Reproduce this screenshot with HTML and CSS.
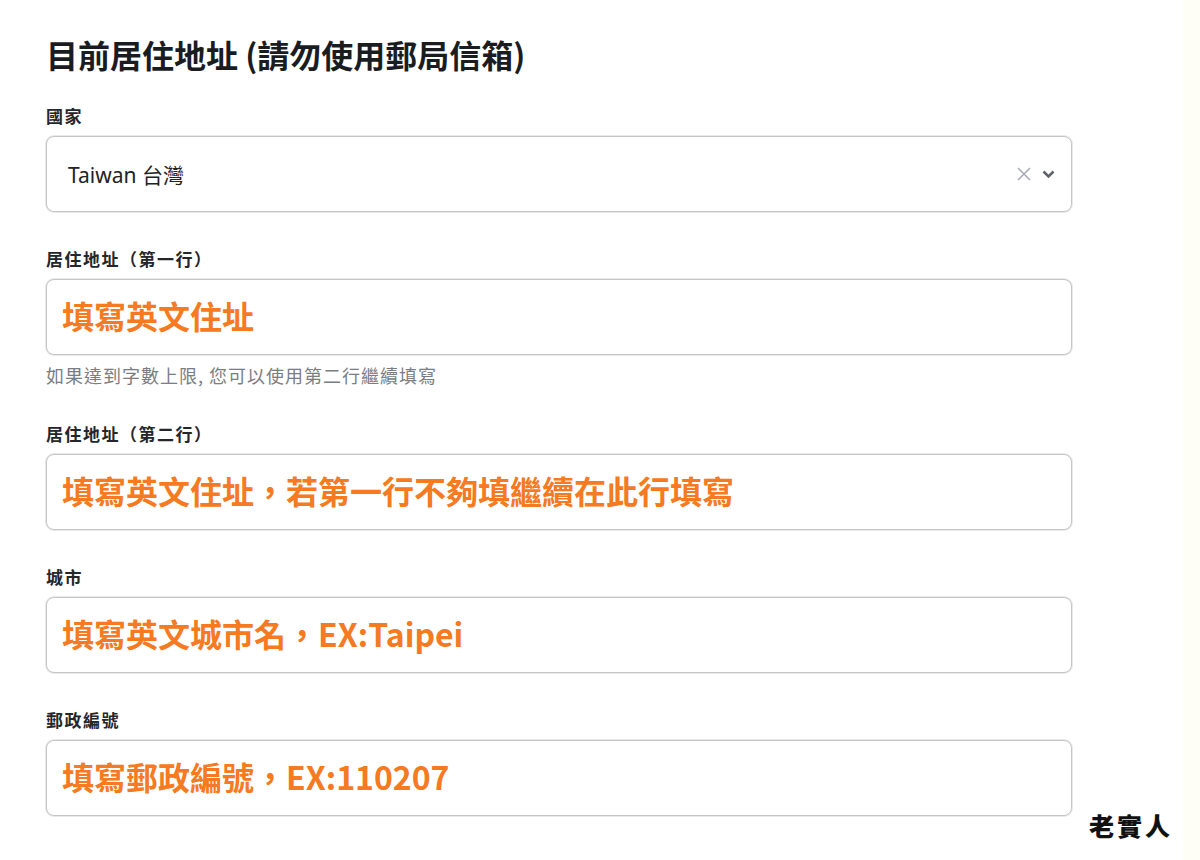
FILE: index.html
```html
<!DOCTYPE html>
<html lang="zh-Hant">
<head>
<meta charset="utf-8">
<title>目前居住地址</title>
<link rel="stylesheet" href="styles.css">
</head>
<body>
<div class="page">
  <main class="form">
    <h1 class="title">目前居住地址 (請勿使用郵局信箱)</h1>

    <div class="field">
      <div class="label">國家</div>
      <div class="box select">
        <span class="select-value">Taiwan 台灣</span>
        <span class="select-icons">
          <svg class="icon-x" width="16" height="16" viewBox="0 0 16 16"><path d="M2 2 L14 14 M14 2 L2 14" stroke="#a9adb3" stroke-width="1.6" fill="none"/></svg>
          <svg class="icon-chev" width="13" height="9" viewBox="0 0 13 9"><path d="M1.5 1.5 L6.5 6.5 L11.5 1.5" stroke="#5f6368" stroke-width="2.6" fill="none" stroke-linejoin="miter"/></svg>
        </span>
      </div>
    </div>

    <div class="field">
      <div class="label">居住地址（第一行）</div>
      <div class="box"><span class="hint">填寫英文住址</span></div>
      <div class="helper">如果達到字數上限, 您可以使用第二行繼續填寫</div>
    </div>

    <div class="field">
      <div class="label">居住地址（第二行）</div>
      <div class="box"><span class="hint">填寫英文住址，若第一行不夠填繼續在此行填寫</span></div>
    </div>

    <div class="field">
      <div class="label">城市</div>
      <div class="box"><span class="hint">填寫英文城市名，EX:Taipei</span></div>
    </div>

    <div class="field">
      <div class="label">郵政編號</div>
      <div class="box"><span class="hint">填寫郵政編號，EX:110207</span></div>
    </div>
  </main>
  <div class="strip"></div>
  <div class="watermark">老實人</div>
</div>
</body>
</html>
```

FILE: styles.css
```css
html, body {
  margin: 0;
  padding: 0;
  background: #ffffff;
}

.page {
  position: relative;
  display: flex;
  width: 1200px;
  height: 860px;
  overflow: hidden;
  font-family: "Noto Sans CJK TC", "Noto Sans", sans-serif;
}

.form {
  flex: 1;
  padding: 34px 0 0 46px;
  display: flex;
  flex-direction: column;
  gap: 37px;
}

.strip {
  width: 17px;
  background: #fffef6;
}

.title {
  margin: 0 0 -5px 0;
  font-size: 32px;
  line-height: 40px;
  font-weight: 700;
  color: #1a1c1f;
  letter-spacing: 0;
}

.field {
  width: 1026px;
  display: flex;
  flex-direction: column;
}

.label {
  font-size: 17px;
  line-height: 20px;
  font-weight: 700;
  color: #24262a;
  margin-bottom: 10px;
  letter-spacing: 1.5px;
}

.box {
  box-sizing: border-box;
  height: 76px;
  border: 1px solid #c6c6c6;
  border-radius: 8px;
  box-shadow: 0 0 0 1px #e9e9e9;
  display: flex;
  align-items: center;
  padding: 0 14px 5px 15px;
  background: #fff;
}

.hint {
  font-size: 32px;
  font-weight: 700;
  color: #f57a22;
  line-height: 1;
}

.select {
  padding-left: 21px;
  padding-bottom: 0;
  justify-content: space-between;
}

.select-value {
  font-family: "Noto Sans", "Noto Sans CJK TC", sans-serif;
  font-size: 21px;
  color: #222;
}

.select-icons {
  display: flex;
  align-items: center;
  gap: 10px;
  margin-right: 2px;
}

.icon-x {
  display: block;
}

.icon-chev {
  display: block;
  margin-top: 1px;
}

.helper {
  margin-top: 9px;
  font-size: 18px;
  line-height: 23px;
  color: #7a7d82;
  letter-spacing: 1px;
}

.watermark {
  position: absolute;
  left: 1089px;
  top: 807px;
  font-size: 25px;
  font-weight: 900;
  letter-spacing: 3px;
  color: #111;
  font-family: "Noto Sans CJK TC", serif;
}
```
